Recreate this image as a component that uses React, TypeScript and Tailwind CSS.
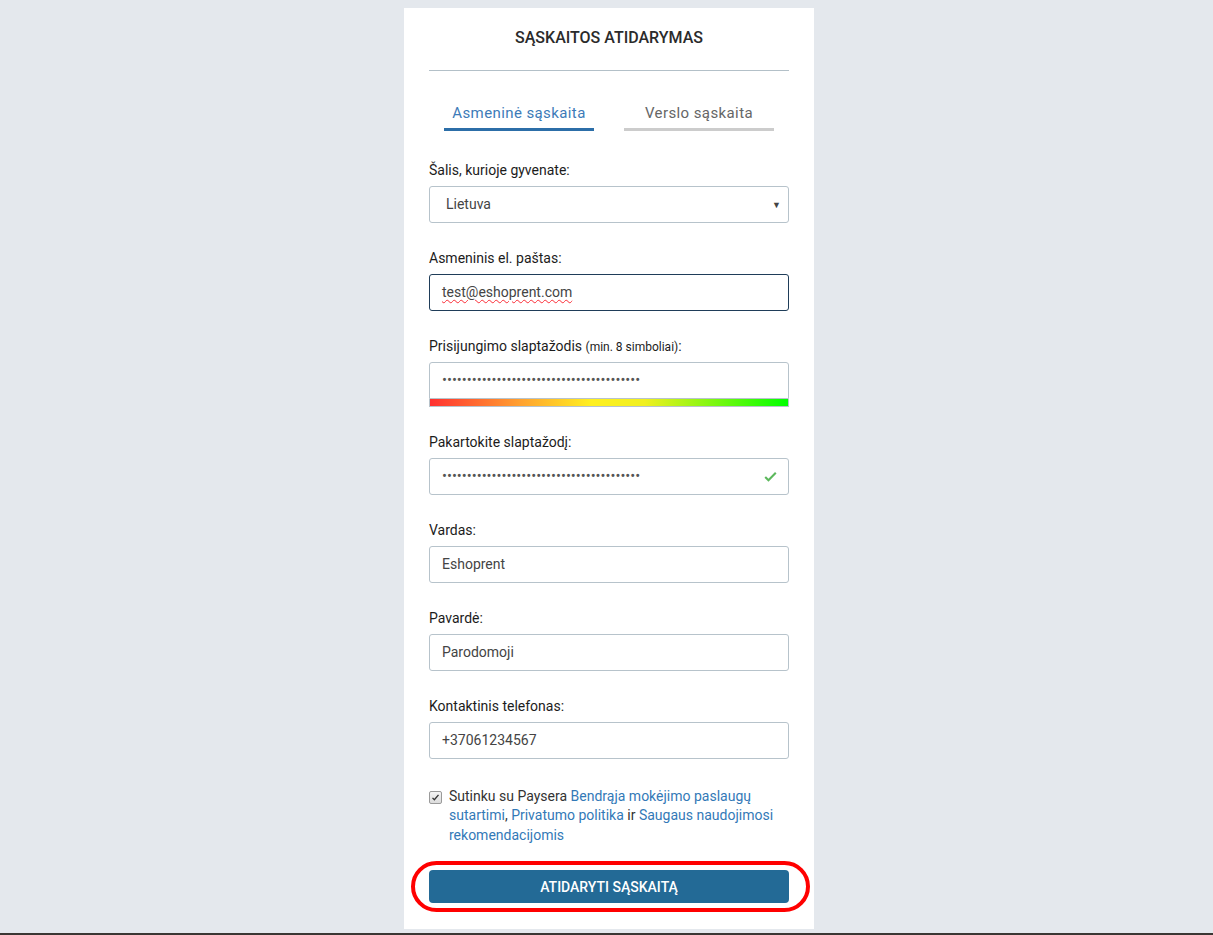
import React, { useState } from 'react';

const inputBase =
    'block w-full h-[37px] px-[12px] text-sm text-[#444] bg-white border rounded-[3px] focus:outline-none';
const inputClass = `${inputBase} border-[#b7c3cb]`;

const Field: React.FC<{ label: React.ReactNode; children: React.ReactNode }> = ({ label, children }) => (
    <div className="mb-[25px]">
        <label className="block text-sm leading-5 text-[#1c1c1c] mb-[6px]">{label}</label>
        {children}
    </div>
);

const App: React.FC = () => {
    const [tab, setTab] = useState<'personal' | 'business'>('personal');
    const [agree, setAgree] = useState(true);
    const dots = '••••••••••••••••••••••••••••••••••••••••';

    const tabClass = (active: boolean) =>
        `w-[150px] pb-[3px] text-[15px] tracking-[0.4px] border-b-[3px] ${active ? 'text-[#3d7bb8] border-[#2c6ea8]' : 'text-[#666] border-[#ccc]'}`;

    return (
        <div className="min-h-[935px] bg-[#e4e8ed] flex flex-col font-['Roboto',sans-serif] antialiased">
            <div className="flex-1 flex justify-center pt-2 pl-[5px]">
                <div className="w-[410px] h-[921px] bg-white px-[25px]">
                    <h1 className="pt-[14px] text-center text-base font-medium text-[#2b2b2b] leading-8">
                        SĄSKAITOS ATIDARYMAS
                    </h1>
                    <div className="mt-[16px] border-t border-[#b3c0c8]" />

                    <div className="flex justify-between px-[15px] mt-[31px]">
                        <button onClick={() => setTab('personal')} className={tabClass(tab === 'personal')}>
                            Asmeninė sąskaita
                        </button>
                        <button onClick={() => setTab('business')} className={tabClass(tab === 'business')}>
                            Verslo sąskaita
                        </button>
                    </div>

                    <form className="mt-[29px]" onSubmit={(e) => e.preventDefault()}>
                        <Field label="Šalis, kurioje gyvenate:">
                            <div className="relative">
                                <div className={`${inputClass} flex items-center pl-[16px]`}>Lietuva</div>
                                <span className="absolute right-[8px] top-[13px] text-[9px] text-[#444]">▼</span>
                            </div>
                        </Field>

                        <Field label="Asmeninis el. paštas:">
                            <div className={`${inputBase} border-[#1f3d59] flex items-center text-[#333]`}>
                                <span className="underline decoration-wavy decoration-red-500 decoration-1 underline-offset-2">
                                    test@eshoprent.com
                                </span>
                            </div>
                        </Field>

                        <Field
                            label={
                                <>
                                    Prisijungimo slaptažodis <span className="text-xs">(min. 8 simboliai)</span>:
                                </>
                            }
                        >
                            <div className={`${inputClass} flex items-center text-[14.7px] text-[#555] rounded-b-none`}>{dots}</div>
                            <div className="h-2 border border-[#b7c3cb] border-t-0 bg-[linear-gradient(to_right,#ff3030_0%,#ffa030_25%,#fff020_45%,#f0f020_60%,#00ff00_100%)]" />
                        </Field>

                        <Field label="Pakartokite slaptažodį:">
                            <div className={`${inputClass} flex items-center justify-between text-[14.7px] text-[#555]`}>
                                <span>{dots}</span>
                                <svg viewBox="0 0 16 16" className="w-[13px] h-[13px] mr-[-1px]">
                                    <path d="M1.5 8.5l4 4 9-9" fill="none" stroke="#5cb85c" strokeWidth="2.6" />
                                </svg>
                            </div>
                        </Field>

                        <Field label="Vardas:">
                            <div className={`${inputClass} flex items-center`}>Eshoprent</div>
                        </Field>

                        <Field label="Pavardė:">
                            <div className={`${inputClass} flex items-center`}>Parodomoji</div>
                        </Field>

                        <Field label="Kontaktinis telefonas:">
                            <div className={`${inputClass} flex items-center`}>+37061234567</div>
                        </Field>

                        <div className="flex items-start mt-[28px]">
                            <button
                                type="button"
                                onClick={() => setAgree(!agree)}
                                className="mt-[4px] w-[13px] h-[13px] shrink-0 flex items-center justify-center border border-[#9a9a9a] rounded-[2px] bg-[linear-gradient(#f4f4f4,#dcdcdc)]"
                            >
                                {agree && (
                                    <svg viewBox="0 0 12 12" className="w-[9px] h-[9px]">
                                        <path d="M2 6.5l2.5 2.5 5.5-6.5" fill="none" stroke="#333" strokeWidth="1.8" />
                                    </svg>
                                )}
                            </button>
                            <p className="ml-[7px] text-sm leading-[19.5px] text-[#333]">
                                Sutinku su Paysera <a className="text-[#3379b7]">Bendrąja mokėjimo paslaugų sutartimi</a>,{' '}
                                <a className="text-[#3379b7]">Privatumo politika</a> ir{' '}
                                <a className="text-[#3379b7]">Saugaus naudojimosi rekomendacijomis</a>
                            </p>
                        </div>

                        <div className="relative mt-[25px]">
                            <button
                                type="submit"
                                className="w-full h-[33px] rounded-[4px] bg-[#236a96] text-white text-sm font-medium"
                            >
                                ATIDARYTI SĄSKAITĄ
                            </button>
                            <div className="absolute -left-[18px] -right-[21px] -top-[9px] -bottom-[9px] border-4 border-[#ff0000] rounded-[26px] pointer-events-none" />
                        </div>
                    </form>
                </div>
            </div>
            <div className="h-[4px]" />
            <div className="h-[2px] bg-[#3a3633]" />
        </div>
    );
};

export default App;
